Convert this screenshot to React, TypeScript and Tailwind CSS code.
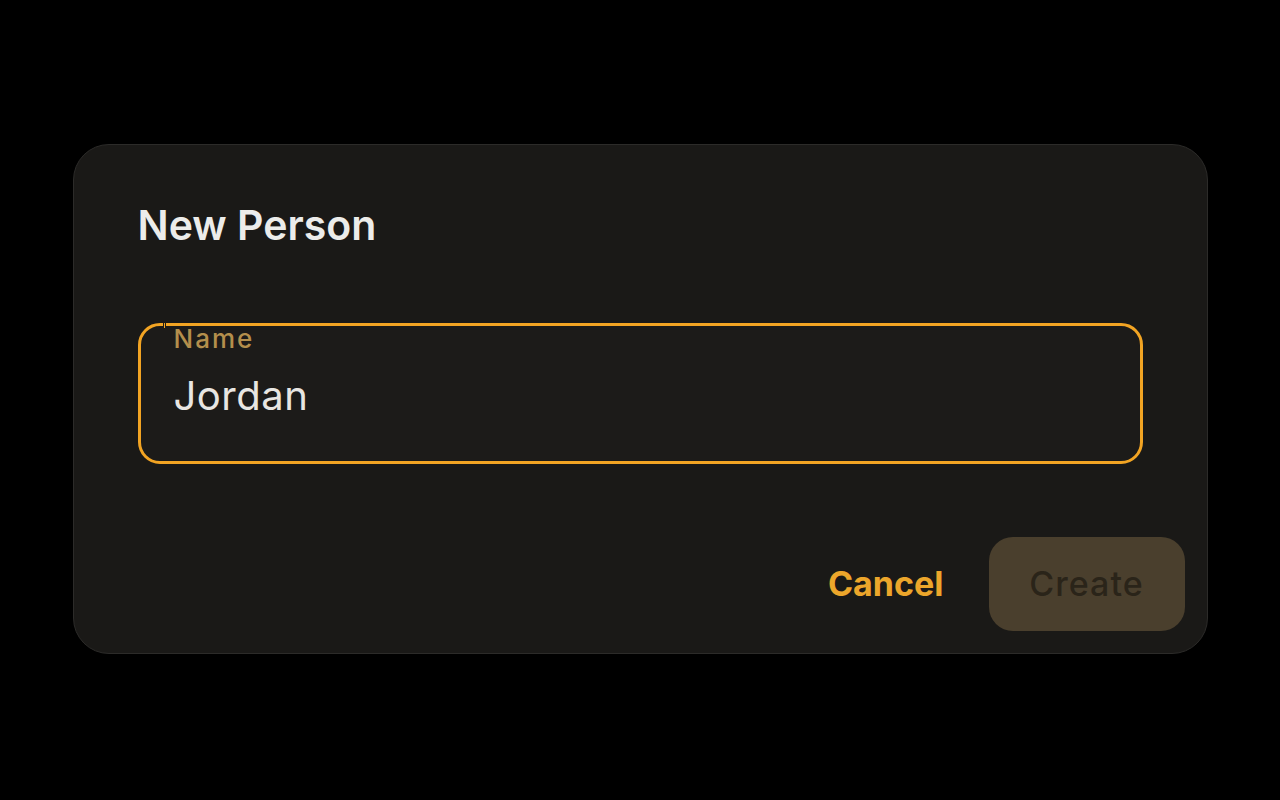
export default function App() {
  return (
    <div
      className="flex min-h-screen items-center justify-center bg-black"
      style={{ fontFamily: "Inter, Roboto, sans-serif" }}
    >
      <div className="mb-[2px] flex h-[510px] w-[1135px] flex-col rounded-[36px] border border-[#2c2b29] bg-[#1a1917] shadow-[0_10px_60px_rgba(0,0,0,0.6)]">
        <h2 className="px-16 pt-[56px] text-[41px] font-semibold leading-[48px] text-[#ececea]">
          New Person
        </h2>

        <div className="mt-[74px] px-16">
          <div className="relative flex h-[141px] flex-col rounded-[22px] border-[3px] border-[#f2a423] bg-[#1c1b19] px-[33px]">
            {/* collapsed notch in the outline */}
            <span className="absolute -top-[3px] left-[22px] h-[3px] w-[3px] bg-[#1a1917]" />
            <span className="absolute -top-[3px] left-[23px] h-[5px] w-px bg-[#f2a423]" />
            <label className="-mt-px text-[26px] font-medium leading-[28px] tracking-[2px] text-[#b48f4c]">
              Name
            </label>
            <div className="mt-[19px] text-[40px] leading-[48px] tracking-[0.5px] text-[#e8e6e2]">
              Jordan
            </div>
          </div>
        </div>

        <div className="mt-[73px] flex items-center justify-end gap-[45px] pr-[22px]">
          <button className="text-[34px] font-bold leading-[40px] text-[#eca62b]">Cancel</button>
          <button className="h-[94px] w-[196px] rounded-[24px] bg-[#4a3f2d] text-[34px] font-medium leading-[40px] tracking-[1px] text-[#2a2419]">
            Create
          </button>
        </div>
      </div>
    </div>
  );
}
